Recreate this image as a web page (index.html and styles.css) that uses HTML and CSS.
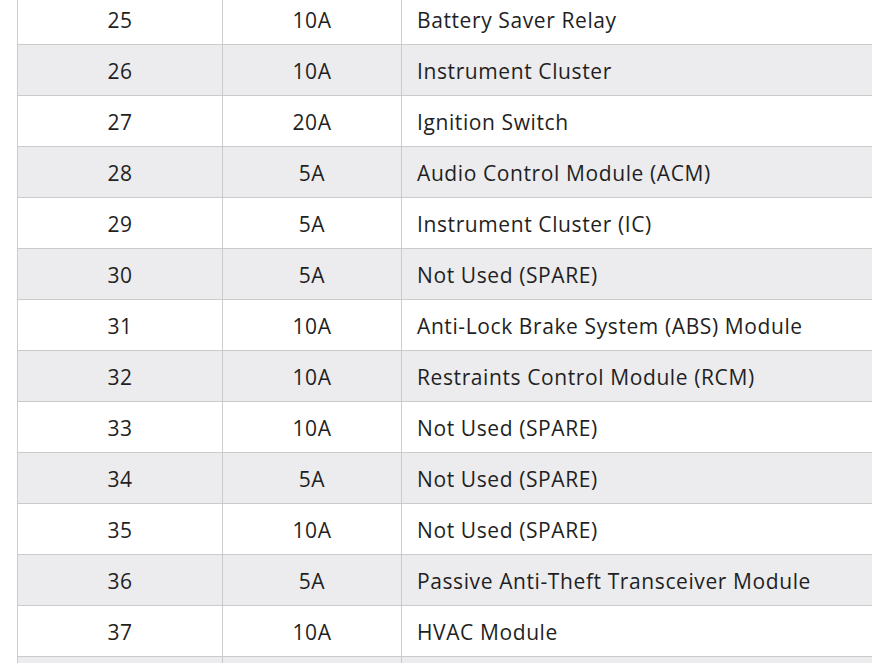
FILE: index.html
```html
<!DOCTYPE html>
<html>
<head>
<meta charset="utf-8">
<link rel="stylesheet" href="styles.css">
</head>
<body>
<div class="wrap">
<table class="fuses">
<colgroup><col class="c1"><col class="c2"><col class="c3"></colgroup>
<tbody>
<tr><td class="num">25</td><td class="amp">10A</td><td class="desc">Battery Saver Relay</td></tr>
<tr><td class="num">26</td><td class="amp">10A</td><td class="desc">Instrument Cluster</td></tr>
<tr><td class="num">27</td><td class="amp">20A</td><td class="desc">Ignition Switch</td></tr>
<tr><td class="num">28</td><td class="amp">5A</td><td class="desc">Audio Control Module (ACM)</td></tr>
<tr><td class="num">29</td><td class="amp">5A</td><td class="desc">Instrument Cluster (IC)</td></tr>
<tr><td class="num">30</td><td class="amp">5A</td><td class="desc">Not Used (SPARE)</td></tr>
<tr><td class="num">31</td><td class="amp">10A</td><td class="desc">Anti-Lock Brake System (ABS) Module</td></tr>
<tr><td class="num">32</td><td class="amp">10A</td><td class="desc">Restraints Control Module (RCM)</td></tr>
<tr><td class="num">33</td><td class="amp">10A</td><td class="desc">Not Used (SPARE)</td></tr>
<tr><td class="num">34</td><td class="amp">5A</td><td class="desc">Not Used (SPARE)</td></tr>
<tr><td class="num">35</td><td class="amp">10A</td><td class="desc">Not Used (SPARE)</td></tr>
<tr><td class="num">36</td><td class="amp">5A</td><td class="desc">Passive Anti-Theft Transceiver Module</td></tr>
<tr><td class="num">37</td><td class="amp">10A</td><td class="desc">HVAC Module</td></tr>
<tr class="partial"><td></td><td></td><td></td></tr>
</tbody>
</table>
</div>
</body>
</html>
```
FILE: styles.css
```css
html, body {
  margin: 0;
  padding: 0;
  background: #fff;
  overflow: hidden;
}
.wrap {
  height: 663px;
  overflow: hidden;
  padding-left: 17px;
}
.fuses {
  margin-top: -7px;
  border-collapse: collapse;
  table-layout: fixed;
  width: 900px;
  font-family: "Open Sans", sans-serif;
  font-size: 21px;
  letter-spacing: 0.6px;
  color: #1f1f24;
}
.c1 { width: 205px; }
.c2 { width: 179px; }
.fuses td {
  border: 1px solid #cbcbcb;
  height: 51px;
  padding: 1px 0 0 0;
  box-sizing: border-box;
  vertical-align: middle;
  white-space: nowrap;
}
.fuses tr:nth-child(even) td {
  background: #ececee;
}
.num, .amp {
  text-align: center;
}
.fuses td.desc {
  padding-left: 15px;
}
```
